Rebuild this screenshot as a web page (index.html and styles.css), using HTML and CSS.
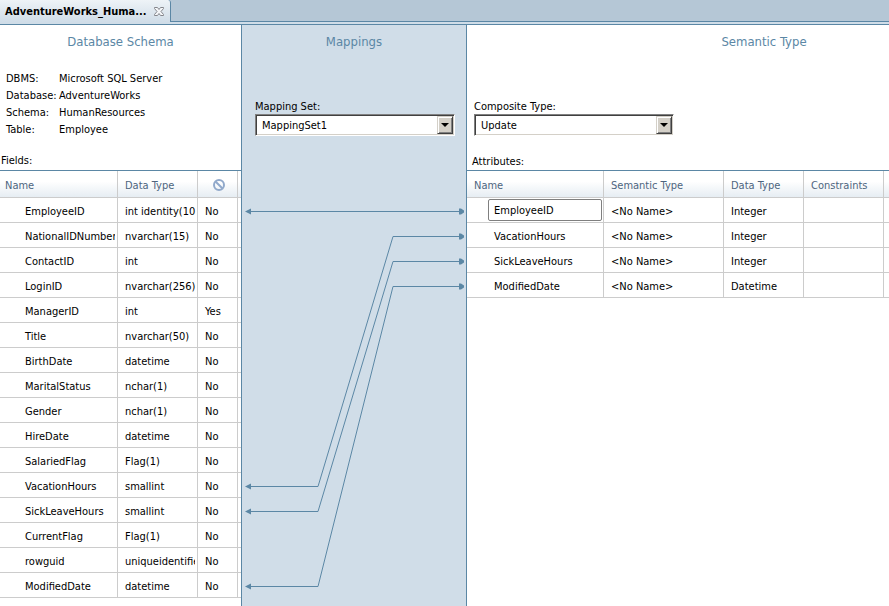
FILE: index.html
```html
<!DOCTYPE html>
<html lang="en">
<head>
    <meta charset="UTF-8">
    <meta name="viewport" content="width=device-width, initial-scale=1.0">
    <title>AdventureWorks_HumanResources</title>
    <link rel="stylesheet" href="styles.css">
</head>
<body>

    <div class="tab-bar">
        <div class="tab">
            <span class="tab-title">AdventureWorks_Huma...</span>
            <button class="tab-close" type="button" aria-label="Close">
                <svg width="10" height="9" viewBox="0 0 10 9">
                    <path d="M.5 .5h3L5 2.500 6.500 .5h3v1L7 4.500l2.500 3v1h-3L5 6.500 3.500 8.500h-3v-1L3 4.500.5 1.500z" fill="#f4f6f8" stroke="#85868c"/>
                </svg>
            </button>
        </div>
    </div>

    <div class="editor">

        <!-- Database schema -->
        <section class="panel schema">
            <div class="panel-head">
                <h2>Database Schema</h2>
                <dl class="info">
                    <dt>DBMS:</dt><dd>Microsoft SQL Server</dd>
                    <dt>Database:</dt><dd>AdventureWorks</dd>
                    <dt>Schema:</dt><dd>HumanResources</dd>
                    <dt>Table:</dt><dd>Employee</dd>
                </dl>
                <div class="table-label">Fields:</div>
            </div>
            <table class="grid">
                <colgroup>
                    <col class="col-field"><col class="col-type"><col class="col-null"><col>
                </colgroup>
                <thead>
                    <tr>
                        <th>Name</th>
                        <th>Data Type</th>
                        <th class="null-head">
                            <svg width="12" height="12" viewBox="0 0 12 12" role="img" aria-label="Nullable">
                                <circle cx="6" cy="6" r="5" fill="none" stroke="#91a9cb" stroke-width="2"/>
                                <path d="M2.500 2.500l7 7" stroke="#91a9cb" stroke-width="2"/>
                            </svg>
                        </th>
                        <th></th>
                    </tr>
                </thead>
                <tbody>
                    <tr><td>EmployeeID</td><td>int identity(10</td><td>No</td><td></td></tr>
                    <tr><td><div class="clip">NationalIDNumber</div></td><td>nvarchar(15)</td><td>No</td><td></td></tr>
                    <tr><td>ContactID</td><td>int</td><td>No</td><td></td></tr>
                    <tr><td>LoginID</td><td>nvarchar(256)</td><td>No</td><td></td></tr>
                    <tr><td>ManagerID</td><td>int</td><td>Yes</td><td></td></tr>
                    <tr><td>Title</td><td>nvarchar(50)</td><td>No</td><td></td></tr>
                    <tr><td>BirthDate</td><td>datetime</td><td>No</td><td></td></tr>
                    <tr><td>MaritalStatus</td><td>nchar(1)</td><td>No</td><td></td></tr>
                    <tr><td>Gender</td><td>nchar(1)</td><td>No</td><td></td></tr>
                    <tr><td>HireDate</td><td>datetime</td><td>No</td><td></td></tr>
                    <tr><td>SalariedFlag</td><td>Flag(1)</td><td>No</td><td></td></tr>
                    <tr><td>VacationHours</td><td>smallint</td><td>No</td><td></td></tr>
                    <tr><td>SickLeaveHours</td><td>smallint</td><td>No</td><td></td></tr>
                    <tr><td>CurrentFlag</td><td>Flag(1)</td><td>No</td><td></td></tr>
                    <tr><td>rowguid</td><td><div class="clip">uniqueidentifier</div></td><td>No</td><td></td></tr>
                    <tr><td>ModifiedDate</td><td>datetime</td><td>No</td><td></td></tr>
                </tbody>
            </table>
        </section>

        <!-- Mappings -->
        <section class="panel mappings">
            <div class="panel-head">
                <h2>Mappings</h2>
                <div class="field">
                    <label for="mapping-set">Mapping Set:</label>
                    <div class="select-box">
                        <select id="mapping-set">
                            <option>MappingSet1</option>
                        </select>
                        <span class="arrow"></span>
                    </div>
                </div>
            </div>
            <svg class="links" width="224" height="430" viewBox="0 0 224 430">
                <defs>
                    <path id="to-field" d="M3 0l6-3v6z"/>
                    <path id="to-attr" d="M217-3h2l3 2v2l-3 2h-2z"/>
                </defs>
                <g fill="none" stroke="#5b87a5">
                    <path d="M8 40.500H218"/>
                    <path d="M8 315.500H76L151 65.500H218"/>
                    <path d="M8 340.500H76L151 90.500H218"/>
                    <path d="M8 415.500H76L151 115.500H218"/>
                </g>
                <g fill="#5b87a5">
                    <use href="#to-field" y="40.500"/>
                    <use href="#to-field" y="315.500"/>
                    <use href="#to-field" y="340.500"/>
                    <use href="#to-field" y="415.500"/>
                    <use href="#to-attr" y="40.500"/>
                    <use href="#to-attr" y="65.500"/>
                    <use href="#to-attr" y="90.500"/>
                    <use href="#to-attr" y="115.500"/>
                </g>
            </svg>
        </section>

        <!-- Semantic type -->
        <section class="panel semantic">
            <div class="panel-head">
                <h2>Semantic Type</h2>
                <div class="field">
                    <label for="composite-type">Composite Type:</label>
                    <div class="select-box">
                        <select id="composite-type">
                            <option>Update</option>
                        </select>
                        <span class="arrow"></span>
                    </div>
                </div>
                <div class="table-label">Attributes:</div>
            </div>
            <table class="grid">
                <colgroup>
                    <col class="col-attr"><col class="col-semantic"><col class="col-type"><col class="col-type"><col>
                </colgroup>
                <thead>
                    <tr><th>Name</th><th>Semantic Type</th><th>Data Type</th><th>Constraints</th><th></th></tr>
                </thead>
                <tbody>
                    <tr>
                        <td class="editing"><input type="text" value="EmployeeID" aria-label="Attribute name"></td>
                        <td>&lt;No Name&gt;</td><td>Integer</td><td></td><td></td>
                    </tr>
                    <tr><td>VacationHours</td><td>&lt;No Name&gt;</td><td>Integer</td><td></td><td></td></tr>
                    <tr><td>SickLeaveHours</td><td>&lt;No Name&gt;</td><td>Integer</td><td></td><td></td></tr>
                    <tr><td>ModifiedDate</td><td>&lt;No Name&gt;</td><td>Datetime</td><td></td><td></td></tr>
                </tbody>
            </table>
        </section>

    </div>

</body>
</html>
```
FILE: styles.css
```css
* {
    box-sizing: border-box;
}

body {
    margin: 0;
    height: 100vh;
    overflow: hidden;
    display: flex;
    flex-direction: column;
    background: #d0dde8;
    color: #000;
    font-family: Tahoma, "DejaVu Sans Condensed", sans-serif;
    font-size: 11px;
    line-height: 17px;
}

.tab-bar {
    display: flex;
    height: 22px;
    flex-shrink: 0;
    margin-bottom: 2px;
    background: #b5c7d6;
    box-shadow: inset 0 -1px #5b87a5;
}

.tab {
    display: flex;
    align-items: center;
    gap: 7px;
    padding: 0 6px 0 5px;
    border-right: 1px solid #5b87a5;
    border-top-right-radius: 3px;
    background: linear-gradient(#eef3f7, #d0dde8);
}

.tab-title {
    font-weight: bold;
}

.tab-close {
    display: flex;
    padding: 0;
    border: 0;
    background: none;
}

.editor {
    flex: 1;
    display: grid;
    grid-template-columns: 242px 224px minmax(0, 1fr);
    border-top: 1px solid #5b87a5;
}

.panel {
    min-width: 0;
    background: #fff;
}

.schema {
    border-right: 1px solid #5b87a5;
}

.mappings {
    background: #d0dde8;
}

.semantic {
    border-left: 1px solid #5b87a5;
}

.panel-head {
    display: flex;
    flex-direction: column;
    height: 145px;
    padding-top: 8px;
}

h2 {
    margin: 0;
    color: #5b87a5;
    font-size: 13px;
    font-weight: normal;
    line-height: 18px;
    text-align: center;
}

.semantic h2 {
    padding-left: 172px;
}

.info {
    display: grid;
    grid-template-columns: 53px 1fr;
    margin: 19px 0 0 6px;
}

.info dd {
    margin: 0;
}

.table-label {
    margin-top: auto;
    padding: 0 1px 1px;
}

.semantic .table-label {
    padding: 0 5px;
    line-height: 16px;
}

.field {
    margin: 48px 0 0 13px;
}

.semantic .field {
    margin-left: 7px;
}

.field label {
    display: block;
    line-height: 15px;
}

.select-box {
    display: flex;
    width: 200px;
    height: 22px;
    padding: 1px;
    border: 1px solid;
    border-color: #808080 #fff #fff #808080;
    background: #fff;
    box-shadow: inset 1px 1px #404040, inset -1px -1px #d4d0c8;
}

.select-box select {
    flex: 1;
    padding: 0 5px;
    border: 0;
    background: none;
    appearance: none;
    font: inherit;
    color: inherit;
}

.arrow {
    display: flex;
    align-items: center;
    justify-content: center;
    width: 16px;
    border: 1px solid;
    border-color: #d4d0c8 #404040 #404040 #d4d0c8;
    background: #d4d0c8;
    box-shadow: inset 1px 1px #fff, inset -1px -1px #808080;
    pointer-events: none;
}

.arrow::before {
    content: "";
    border: 4px solid transparent;
    border-top-color: #000;
    border-bottom: 0;
}

.links {
    display: block;
    margin-top: 1px;
}

/* Field and attribute tables */
.grid {
    width: 100%;
    table-layout: fixed;
    border-collapse: separate;
    border-spacing: 0;
    border-top: 1px solid #5b87a5;
}

.col-field {
    width: 118px;
}

.col-attr {
    width: 137px;
}

.col-semantic {
    width: 120px;
}

.col-type {
    width: 80px;
}

.col-null {
    width: 40px;
}

.grid th,
.grid td {
    height: 25px;
    padding: 2px 2px 0 7px;
    border-right: 1px solid #ccc;
    border-bottom: 1px solid #ccc;
    overflow: hidden;
    text-align: left;
    white-space: nowrap;
}

.grid th {
    height: 27px;
    background: linear-gradient(#fff 40%, #e6edf3);
    color: #4e6580;
    font-weight: normal;
}

.grid th:last-child,
.grid td:last-child {
    padding: 0;
    border-right: 0;
}

.grid th:first-child {
    padding-left: 5px;
}

.semantic th:first-child {
    padding-left: 7px;
}

.grid td:first-child {
    padding-left: 25px;
}

.semantic td:first-child {
    padding-left: 27px;
}

.clip {
    overflow: hidden;
}

.grid .null-head {
    padding-right: 4px;
    text-align: center;
}

.null-head svg {
    display: block;
    margin: 0 auto;
}

.semantic .editing:first-child {
    padding: 0 1px 0 21px;
}

.editing input {
    display: block;
    width: 100%;
    height: 22px;
    padding: 1px 5px 0;
    border: 1px solid #7f7f7f;
    border-radius: 2px;
    font: inherit;
}
```
